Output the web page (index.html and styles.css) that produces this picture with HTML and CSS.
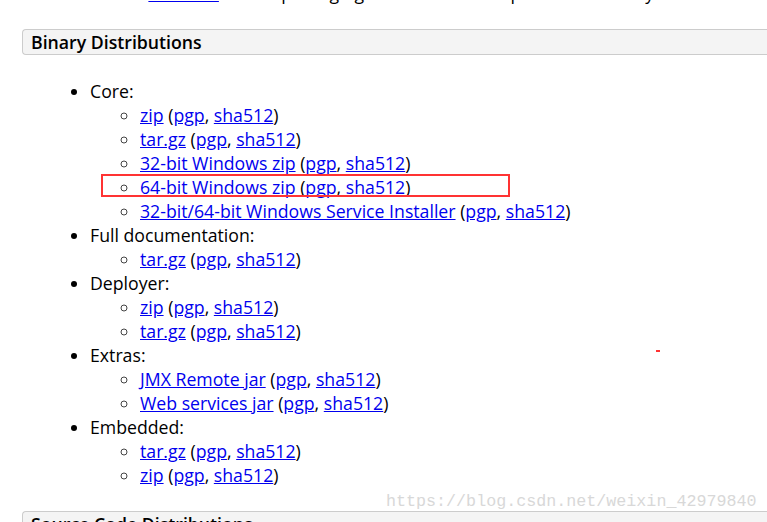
FILE: index.html
```html
<!DOCTYPE html>
<html lang="en">
<head>
<meta charset="utf-8">
<title>Binary Distributions</title>
<link rel="stylesheet" href="styles.css">
</head>
<body>
<div class="page">
  <p class="intro">Please see the <a href="#">README</a> file for packaging information. It explains what every distribution contains.</p>

  <section class="dist">
    <h3 class="dist-title">Binary Distributions</h3>
    <ul class="groups">
      <li>Core:
        <ul class="files">
          <li><a href="#">zip</a> (<a href="#">pgp</a>, <a href="#">sha512</a>)</li>
          <li><a href="#">tar.gz</a> (<a href="#">pgp</a>, <a href="#">sha512</a>)</li>
          <li><a href="#">32-bit Windows zip</a> (<a href="#">pgp</a>, <a href="#">sha512</a>)</li>
          <li class="marked"><a href="#">64-bit Windows zip</a> (<a href="#">pgp</a>, <a href="#">sha512</a>)</li>
          <li><a href="#">32-bit/64-bit Windows Service Installer</a> (<a href="#">pgp</a>, <a href="#">sha512</a>)</li>
        </ul>
      </li>
      <li>Full documentation:
        <ul class="files">
          <li><a href="#">tar.gz</a> (<a href="#">pgp</a>, <a href="#">sha512</a>)</li>
        </ul>
      </li>
      <li>Deployer:
        <ul class="files">
          <li><a href="#">zip</a> (<a href="#">pgp</a>, <a href="#">sha512</a>)</li>
          <li><a href="#">tar.gz</a> (<a href="#">pgp</a>, <a href="#">sha512</a>)</li>
        </ul>
      </li>
      <li>Extras:
        <ul class="files">
          <li><a href="#">JMX Remote jar</a> (<a href="#">pgp</a>, <a href="#">sha512</a>)</li>
          <li><a href="#">Web services jar</a> (<a href="#">pgp</a>, <a href="#">sha512</a>)</li>
        </ul>
      </li>
      <li>Embedded:
        <ul class="files">
          <li><a href="#">tar.gz</a> (<a href="#">pgp</a>, <a href="#">sha512</a>)</li>
          <li><a href="#">zip</a> (<a href="#">pgp</a>, <a href="#">sha512</a>)</li>
        </ul>
      </li>
    </ul>
  </section>

  <section class="dist">
    <h3 class="dist-title">Source Code Distributions</h3>
  </section>

  <span class="red-mark"></span>
  <span class="watermark">https://blog.csdn.net/weixin_42979840</span>
</div>
</body>
</html>
```

FILE: styles.css
```css
html, body {
  margin: 0;
  background: #fff;
}

body {
  font-family: "Open Sans", "Liberation Sans", sans-serif;
  font-size: 17.7px;
  line-height: 24px;
  color: #000;
  overflow: hidden;
}

a {
  color: #0000ee;
  text-decoration: underline;
}

.page {
  position: relative;
  margin: -19px -40px 0 0;
  padding-left: 22px;
}

.intro {
  margin: 0 0 24px 4px;
  white-space: nowrap;
}

.dist-title {
  margin: 0;
  height: 24px;
  border: 1px solid #cccccc;
  border-right: none;
  border-radius: 4px 0 0 4px;
  background: #f4f4f4;
  padding-left: 8px;
  font-size: 17.7px;
  font-weight: 600;
  line-height: 24px;
}

.groups {
  margin: 24px 0;
  padding-left: 68px;
  list-style-type: disc;
}

.files {
  margin: 0;
  padding-left: 50px;
  list-style-type: circle;
}

.files li::marker {
  color: #444;
}

.marked {
  position: relative;
}

.marked::after {
  content: "";
  position: absolute;
  left: -39px;
  top: -1px;
  width: 405px;
  height: 19px;
  border: 2px solid #f33;
  pointer-events: none;
}

.red-mark {
  position: absolute;
  left: 656px;
  top: 369px;
  width: 4px;
  height: 2px;
  background: #f33;
}

.watermark {
  position: absolute;
  left: 386px;
  top: 509px;
  font-family: "Liberation Mono", monospace;
  font-size: 16.7px;
  line-height: 24px;
  color: #d8d8d8;
  white-space: nowrap;
}
```
